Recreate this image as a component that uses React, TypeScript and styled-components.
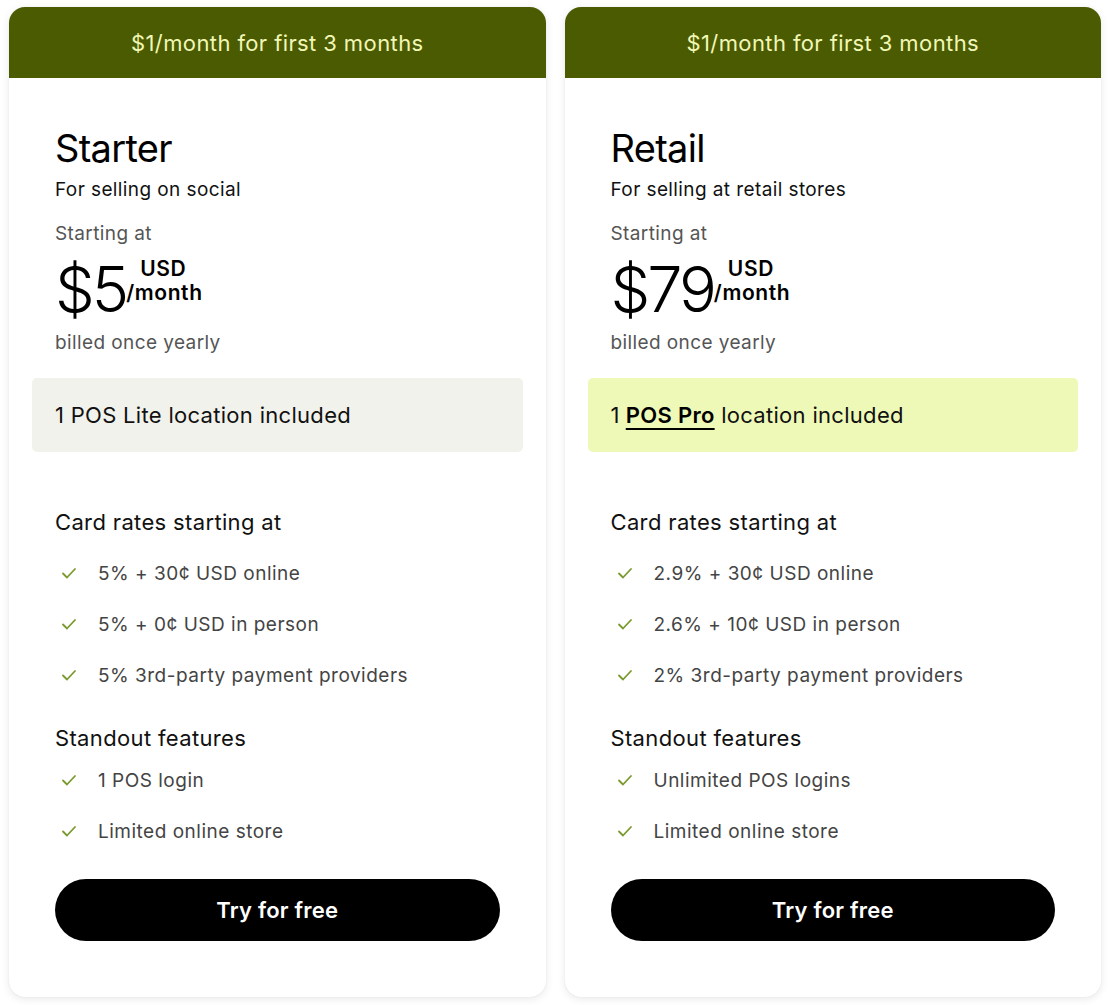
import React from 'react';
import styled, { createGlobalStyle } from 'styled-components';

const GlobalStyle = createGlobalStyle`
  body {
    margin: 0;
    background: #ffffff;
    font-family: Inter, "Noto Sans", sans-serif;
    color: #000;
  }
`;

const Page = styled.div`
  display: flex;
  gap: 19px;
  padding: 7px 7px 8px 9px;
`;

const Card = styled.div`
  width: 537px;
  background: #fff;
  border-radius: 16px;
  overflow: hidden;
  box-shadow: 0 2px 8px rgba(0, 0, 0, 0.09), 0 0 1px rgba(0, 0, 0, 0.12);
  display: flex;
  flex-direction: column;
`;

const Banner = styled.div`
  height: 71px;
  background: #4b5b02;
  color: #f1f7b5;
  font-size: 22px;
  letter-spacing: 0.4px;
  display: flex;
  align-items: center;
  justify-content: center;
`;

const Body = styled.div`
  padding: 47px 46px 56px;
  display: flex;
  flex-direction: column;
`;

const Title = styled.h2`
  margin: 0;
  font-size: 38px;
  line-height: 46px;
  font-weight: 400;
  letter-spacing: -0.7px;
`;

const Subtitle = styled.div`
  margin-top: 6px;
  font-size: 19px;
  line-height: 26px;
  letter-spacing: 0.4px;
  color: #111;
`;

const Muted = styled.div<{ $top: number }>`
  margin-top: ${p => p.$top}px;
  font-size: 19px;
  line-height: 26px;
  letter-spacing: 0.4px;
  color: #555;
`;

const PriceRow = styled.div`
  display: flex;
  align-items: flex-start;
  margin-top: 8px;
`;

const Amount = styled.span`
  font-size: 63px;
  line-height: 68px;
  font-weight: 300;
  letter-spacing: -3px;
`;

const Unit = styled.span`
  display: flex;
  flex-direction: column;
  font-size: 21px;
  line-height: 24px;
  font-weight: 600;
  letter-spacing: 0.6px;
  margin-top: 2px;
  span:first-child {
    padding-left: 14px;
  }
`;

const Included = styled.div<{ $tone: 'lite' | 'pro' }>`
  margin: 22px -23px 0;
  height: 74px;
  border-radius: 5px;
  background: ${p => (p.$tone === 'pro' ? '#eef9b8' : '#f2f2ec')};
  display: flex;
  align-items: center;
  padding: 0 23px;
  font-size: 22px;
  letter-spacing: 0.3px;
  color: #111;
  a {
    color: #000;
    font-weight: 600;
    text-decoration: underline;
    text-underline-offset: 5px;
    text-decoration-thickness: 2px;
    margin-left: 6px;
  }
`;

const Heading = styled.div<{ $top: number }>`
  margin-top: ${p => p.$top}px;
  font-size: 22px;
  line-height: 28px;
  letter-spacing: 0.35px;
  color: #111;
`;

const List = styled.ul<{ $top: number }>`
  list-style: none;
  margin: ${p => p.$top}px 0 0;
  padding: 0;
  display: flex;
  flex-direction: column;
  gap: 23px;
`;

const Item = styled.li`
  display: flex;
  align-items: center;
  height: 28px;
  font-size: 19px;
  letter-spacing: 0.5px;
  color: #444;
  svg {
    width: 16px;
    height: 16px;
    margin: 0 21px 0 6px;
    flex-shrink: 0;
  }
`;

const Button = styled.button`
  margin-top: 34px;
  height: 62px;
  border: none;
  border-radius: 31px;
  background: #000;
  color: #fff;
  font-family: Inter, sans-serif;
  font-size: 22px;
  font-weight: 600;
  letter-spacing: 0.2px;
  cursor: pointer;
`;

const Check = () => (
  <svg viewBox="0 0 16 16" fill="none">
    <path d="M2 8.5l4 4L14 4" stroke="#7a9a2c" strokeWidth="1.8" strokeLinecap="round" strokeLinejoin="round" />
  </svg>
);

interface Plan {
  name: string;
  tagline: string;
  price: string;
  tone: 'lite' | 'pro';
  rates: string[];
  features: string[];
}

const plans: Plan[] = [
  {
    name: 'Starter',
    tagline: 'For selling on social',
    price: '$5',
    tone: 'lite',
    rates: ['5% + 30¢ USD online', '5% + 0¢ USD in person', '5% 3rd-party payment providers'],
    features: ['1 POS login', 'Limited online store'],
  },
  {
    name: 'Retail',
    tagline: 'For selling at retail stores',
    price: '$79',
    tone: 'pro',
    rates: ['2.9% + 30¢ USD online', '2.6% + 10¢ USD in person', '2% 3rd-party payment providers'],
    features: ['Unlimited POS logins', 'Limited online store'],
  },
];

function PlanCard({ plan }: { plan: Plan }) {
  return (
    <Card>
      <Banner>$1/month for first 3 months</Banner>
      <Body>
        <Title>{plan.name}</Title>
        <Subtitle>{plan.tagline}</Subtitle>
        <Muted $top={18}>Starting at</Muted>
        <PriceRow>
          <Amount>{plan.price}</Amount>
          <Unit>
            <span>USD</span>
            <span>/month</span>
          </Unit>
        </PriceRow>
        <Muted $top={7}>billed once yearly</Muted>
        <Included $tone={plan.tone}>
          {plan.tone === 'pro' ? (
            <>1<a>POS Pro</a>&nbsp;location included</>
          ) : (
            '1 POS Lite location included'
          )}
        </Included>
        <Heading $top={56}>Card rates starting at</Heading>
        <List $top={23}>
          {plan.rates.map(r => (
            <Item key={r}><Check />{r}</Item>
          ))}
        </List>
        <Heading $top={35}>Standout features</Heading>
        <List $top={14}>
          {plan.features.map(f => (
            <Item key={f}><Check />{f}</Item>
          ))}
        </List>
        <Button>Try for free</Button>
      </Body>
    </Card>
  );
}

export default function App() {
  return (
    <>
      <GlobalStyle />
      <Page>
        {plans.map(p => (
          <PlanCard key={p.name} plan={p} />
        ))}
      </Page>
    </>
  );
}
